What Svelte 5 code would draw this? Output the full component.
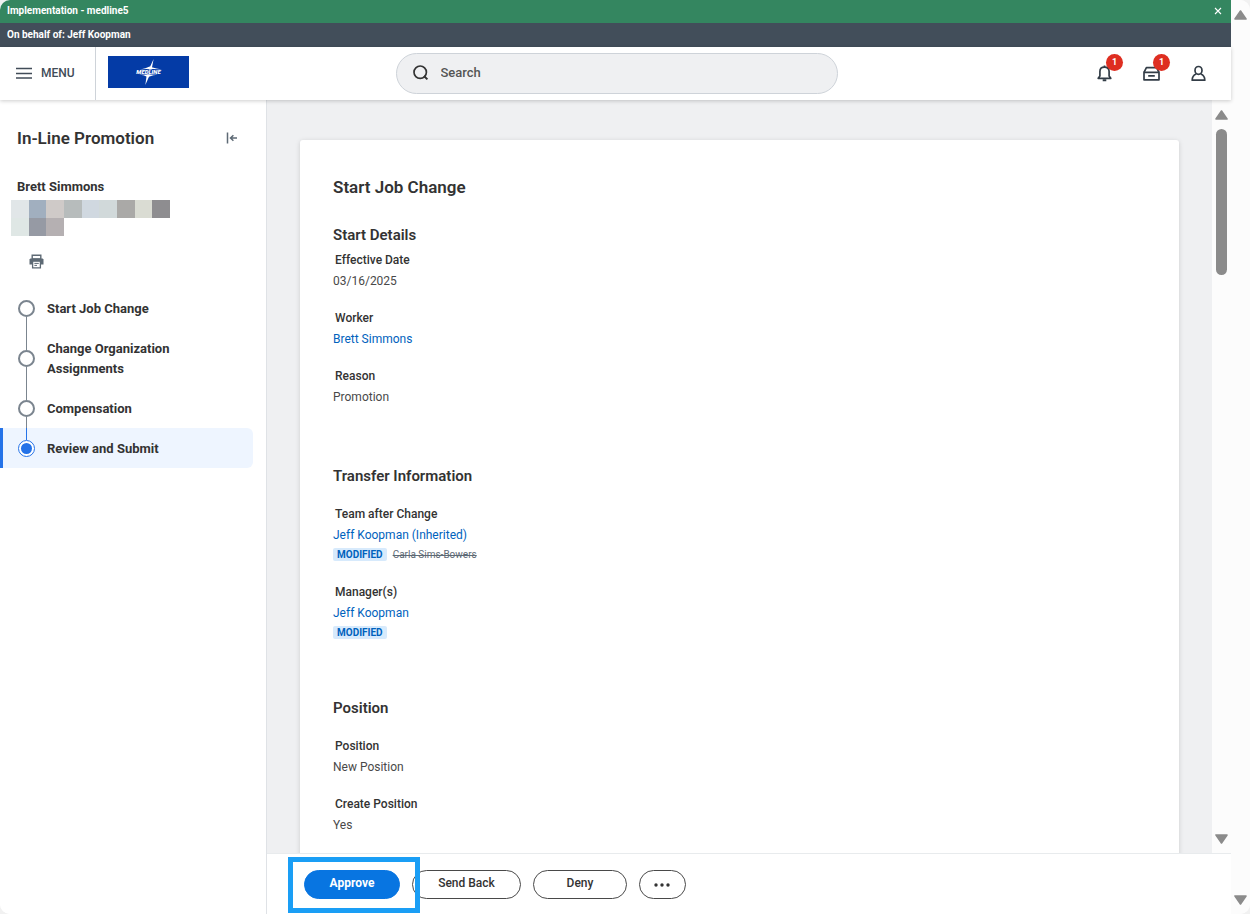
<script lang="ts">
  interface Field {
    label: string;
    value: string;
    link?: boolean;
    modified?: boolean;
    previous?: string;
  }

  interface Section {
    title: string;
    tight?: boolean;
    fields: Field[];
  }

  const sections: Section[] = [
    {
      title: 'Start Details',
      tight: true,
      fields: [
        { label: 'Effective Date', value: '03/16/2025' },
        { label: 'Worker', value: 'Brett Simmons', link: true },
        { label: 'Reason', value: 'Promotion' }
      ]
    },
    {
      title: 'Transfer Information',
      fields: [
        { label: 'Team after Change', value: 'Jeff Koopman (Inherited)', link: true, modified: true, previous: 'Carla Sims-Bowers' },
        { label: 'Manager(s)', value: 'Jeff Koopman', link: true, modified: true }
      ]
    },
    {
      title: 'Position',
      fields: [
        { label: 'Position', value: 'New Position' },
        { label: 'Create Position', value: 'Yes' }
      ]
    }
  ];

  const steps = ['Start Job Change', 'Change Organization Assignments', 'Compensation', 'Review and Submit'];
  let current = $state(3);
  let query = $state('');
  let showBanner = $state(true);

  // Redacted job title under the worker's name
  const mosaic = [
    '#e1e6e8', '#a1afbf', '#cfcac8', '#b7bcbc', '#d0d8e0', '#d1d9da', '#aaa9a7', '#dadcd3', '#8e8d90',
    '#dfe7e5', '#969aa4', '#b5b0b2'
  ];
</script>

{#snippet arrow(down: boolean)}
  <svg class="arrow" class:down width="13" height="10" viewBox="0 0 13 10" aria-hidden="true">
    <path d="M6.5 1 L12 9 H1 Z" fill="#8b8b8b" stroke="#8b8b8b" stroke-width="1.6" stroke-linejoin="round" />
  </svg>
{/snippet}

<div class="window">
  <div class="app">
    {#if showBanner}
      <div class="bar env">
        <span>Implementation - medline5</span>
        <button class="close" aria-label="Close" onclick={() => (showBanner = false)}>
          <svg width="8" height="8" viewBox="0 0 8 8"><path d="M1 1 L7 7 M7 1 L1 7" stroke="#fff" stroke-width="1.1" /></svg>
        </button>
      </div>
    {/if}
    <div class="bar behalf">On behalf of: Jeff Koopman</div>

    <header>
      <div class="brand">
        <button class="menu">
          <svg width="16" height="12" viewBox="0 0 16 12" aria-hidden="true">
            <path d="M0 1.5 H16 M0 6.5 H16 M0 11 H16" stroke="#414c58" stroke-width="1.7" />
          </svg>
          MENU
        </button>
        <a class="logo" href="#home" aria-label="Medline">
          <svg width="81" height="32" viewBox="0 0 81 32">
            <rect width="81" height="32" fill="#043ba6" />
            <path d="M45.6 3 L43.6 13.4 H40.8 Z M37.3 29 L38.8 18.6 H42 Z" fill="#fff" />
            <path d="M32 13.4 Q38 12.4 41.6 10.4 L43.8 11.2 Q48 12.6 54 13.4 Q46 12.9 41.5 13.2 Q37 12.9 32 13.4 Z" fill="#fff" />
            <path d="M31 18.8 Q36 18.9 39 20.8 L41.6 20.4 Q45 18.9 50 18.7 Q40 18.3 31 18.8 Z" fill="#fff" />
            <text x="40.5" y="18.2" text-anchor="middle" font-size="6" font-weight="900" font-style="italic" fill="#fff">MEDLINE</text>
          </svg>
        </a>
      </div>

      <label class="search">
        <svg width="16" height="16" viewBox="0 0 16 16" aria-hidden="true">
          <circle cx="7.2" cy="7.2" r="6.2" fill="none" stroke="#333" stroke-width="1.7" />
          <path d="M11 11 L14.4 14.4" stroke="#333" stroke-width="2" />
        </svg>
        <input type="search" placeholder="Search" aria-label="Search" bind:value={query} />
      </label>

      <nav class="tools">
        <button aria-label="Notifications">
          <svg width="17" height="17" viewBox="0 0 17 17" fill="none" stroke="#333d47" stroke-width="1.7">
            <path d="M8.5 0.4 V2" />
            <path d="M3.9 11 V6.6 Q3.9 2.1 8.5 2.1 Q13.1 2.1 13.1 6.6 V11 L14.8 13.3 H2.2 Z" stroke-linejoin="round" />
            <path d="M6.7 15.2 H10.3" stroke-width="2" />
          </svg>
          <span class="badge">1</span>
        </button>
        <button aria-label="Inbox">
          <svg width="17" height="17" viewBox="0 0 17 17" fill="none" stroke="#333d47" stroke-width="1.7" stroke-linejoin="round">
            <path d="M1 7.4 L3.4 2.6 H13.6 L16 7.4" />
            <path d="M1 7.4 H16 V14.8 H1 Z" />
            <path d="M5.2 10.9 H11.8" />
          </svg>
          <span class="badge">1</span>
        </button>
        <button aria-label="Profile">
          <svg width="17" height="17" viewBox="0 0 17 17" fill="none" stroke="#333d47" stroke-width="1.7" stroke-linejoin="round">
            <ellipse cx="8.5" cy="5.4" rx="3.5" ry="3.9" />
            <path d="M6.2 9 Q2.2 10.6 2.2 15.2 H14.8 Q14.8 10.6 10.8 9" />
          </svg>
        </button>
      </nav>
    </header>

    <div class="body">
      <aside>
        <div class="process">
          <h1>In-Line Promotion</h1>
          <button class="collapse" aria-label="Collapse panel">
            <svg width="12" height="12" viewBox="0 0 12 12" fill="none" stroke="#5e6a75" stroke-width="1.5">
              <path d="M1.5 0.5 V11.5" />
              <path d="M11 6 H4.5 M7.4 3.2 L4.5 6 L7.4 8.8" />
            </svg>
          </button>
        </div>
        <p class="worker">Brett Simmons</p>
        <div class="mosaic" aria-hidden="true">
          {#each mosaic as color}
            <i style="background: {color}"></i>
          {/each}
        </div>
        <button class="print" aria-label="Print">
          <svg width="15" height="15" viewBox="0 0 15 15">
            <path d="M3.2 1.2 H11.8 V5 H3.2 Z" fill="#fff" stroke="#5e6a75" stroke-width="1.4" />
            <path d="M1.4 4.4 H13.6 L14.5 5.4 V10.6 H0.5 V5.4 Z" fill="#5e6a75" />
            <path d="M3.6 7.2 H11.4 V13.8 H3.6 Z" fill="#fff" stroke="#5e6a75" stroke-width="1.3" />
            <path d="M5.4 9.4 H9.8 M5.4 11.4 H8" stroke="#5e6a75" stroke-width="1" />
          </svg>
        </button>
        <ol class="steps">
          {#each steps as step, i}
            <li>
              <button class="step" class:active={i === current} onclick={() => (current = i)}>
                <span class="track"><span class="dot"></span></span>
                <span class="name">{step}</span>
              </button>
            </li>
          {/each}
        </ol>
      </aside>

      <main>
        <div class="scroller">
          <div class="content">
            <article class="card">
              <h2>Start Job Change</h2>
              {#each sections as section}
                <section class:tight={section.tight}>
                  <h3>{section.title}</h3>
                  <dl>
                    {#each section.fields as field}
                      <div class="field">
                        <dt>{field.label}</dt>
                        <dd>
                          {#if field.link}<a href="#profile">{field.value}</a>{:else}{field.value}{/if}
                        </dd>
                        {#if field.modified}
                          <dd class="change">
                            <span class="tag">MODIFIED</span>
                            {#if field.previous}<s>{field.previous}</s>{/if}
                          </dd>
                        {/if}
                      </div>
                    {/each}
                  </dl>
                </section>
              {/each}
            </article>
          </div>
          <div class="scrollbar">
            {@render arrow(false)}
            <div class="rail"><div class="thumb"></div></div>
            {@render arrow(true)}
          </div>
        </div>

        <footer>
          <div class="target"><button class="pill primary">Approve</button></div>
          <button class="pill wide">Send Back</button>
          <button class="pill">Deny</button>
          <button class="pill more" aria-label="More actions">
            <svg width="16" height="4" viewBox="0 0 16 4" fill="#333">
              <circle cx="2" cy="2" r="1.7" /><circle cx="8" cy="2" r="1.7" /><circle cx="14" cy="2" r="1.7" />
            </svg>
          </button>
        </footer>
      </main>
    </div>
  </div>

  <div class="scrollbar">
    {@render arrow(false)}
    <div class="rail"></div>
    {@render arrow(true)}
  </div>
</div>

<style>
  :global(body) {
    margin: 0;
    background: #f1f1f1;
  }

  .window {
    display: flex;
    height: 100vh;
    border-radius: 10px;
    overflow: hidden;
    background: #fcfcfc;
    font-family: Roboto, 'Liberation Sans', sans-serif;
    font-size: 12px;
    color: #333;
  }

  .window * {
    box-sizing: border-box;
  }

  button {
    font: inherit;
    color: inherit;
    background: none;
    border: 0;
    padding: 0;
    cursor: pointer;
  }

  svg {
    display: block;
    flex: none;
  }

  h1, h2, h3, p, dl, dd, ol {
    margin: 0;
    padding: 0;
  }

  .app {
    flex: 1;
    min-width: 0;
    display: flex;
    flex-direction: column;
    background: #fff;
  }

  /* Environment bars */
  .bar {
    flex: none;
    display: flex;
    align-items: center;
    justify-content: space-between;
    height: 24px;
    padding: 0 9px 2px 7px;
    font-size: 10px;
    font-weight: 700;
    color: #fff;
  }

  .env {
    height: 23px;
    background: #348660;
  }

  .behalf {
    background: #424e5a;
  }

  /* Header */
  header {
    position: relative;
    z-index: 1;
    flex: none;
    display: grid;
    grid-template-columns: 1fr minmax(0, 442px) 1fr;
    align-items: center;
    height: 53px;
    padding-left: 2px;
    background: #fff;
    box-shadow: 0 1px 4px rgba(0, 0, 0, 0.2);
  }

  .brand {
    display: flex;
    align-items: center;
    gap: 12px;
    height: 100%;
  }

  .menu {
    display: flex;
    align-items: center;
    gap: 9px;
    height: 100%;
    padding: 0 20px 2px 14px;
    border-right: 1px solid #ced3d9;
    font-weight: 500;
    color: #414c58;
  }

  .logo {
    padding-bottom: 3px;
  }

  .search {
    display: flex;
    align-items: center;
    gap: 12px;
    height: 41px;
    padding: 0 16px 2px;
    border: 1px solid #ced3d9;
    border-radius: 21px;
    background: #eff0f2;
  }

  .search input {
    flex: 1;
    min-width: 0;
    padding: 0;
    border: 0;
    outline: 0;
    background: none;
    font: 500 13px Roboto, sans-serif;
    color: #333;
  }

  .search input::placeholder {
    color: #555;
    opacity: 1;
  }

  .tools {
    display: flex;
    justify-content: flex-end;
    gap: 30px;
    padding-right: 24px;
  }

  .tools button {
    position: relative;
  }

  .badge {
    position: absolute;
    top: -11px;
    right: -10px;
    width: 17px;
    height: 17px;
    border-radius: 50%;
    background: #de2e21;
    color: #fff;
    font-size: 9px;
    line-height: 17px;
    font-weight: 700;
    text-align: center;
  }

  .body {
    flex: 1;
    min-height: 0;
    display: flex;
  }

  /* Process panel */
  aside {
    flex: none;
    width: 267px;
    border-right: 1px solid #dfe2e6;
  }

  .process {
    display: flex;
    align-items: center;
    justify-content: space-between;
    padding: 26px 28px 0 17px;
  }

  h1, h2 {
    font-size: 17px;
    line-height: 24px;
    font-weight: 600;
  }

  .worker {
    padding: 27px 17px 0;
    font-size: 13px;
    line-height: 20px;
    font-weight: 700;
  }

  .mosaic {
    display: grid;
    grid-template-columns: repeat(9, 1fr);
    grid-auto-rows: 18px;
    width: 159px;
    margin: 3px 0 0 11px;
  }

  .print {
    display: block;
    margin: 18px 0 0 29px;
  }

  .steps {
    list-style: none;
    margin: 19px 13px 0 0;
  }

  .step {
    display: flex;
    width: 100%;
    border-left: 3px solid transparent;
    border-radius: 0 6px 6px 0;
    font-size: 13px;
    line-height: 20px;
    font-weight: 700;
    text-align: left;
  }

  .track {
    display: flex;
    flex-direction: column;
    align-items: center;
    width: 17px;
    margin: 0 12px 0 15px;
    color: #7b858f;
  }

  .track::before,
  .track::after {
    content: '';
    flex: 1;
    width: 1px;
    background: currentColor;
  }

  li:first-child .track::before,
  li:last-child .track::after {
    background: none;
  }

  .dot {
    width: 17px;
    height: 17px;
    padding: 2px;
    border: 2px solid currentColor;
    border-radius: 50%;
    background: #fff;
  }

  .name {
    flex: 1;
    padding: 11px 60px 9px 0;
  }

  .step.active {
    border-left-color: #2573e8;
    background: #eef5ff;
  }

  .active .track {
    color: #2573e8;
  }

  .active .dot::before {
    content: '';
    display: block;
    height: 100%;
    border-radius: 50%;
    background: currentColor;
    box-shadow: 0 0 0 1px currentColor;
  }

  .active .dot {
    border-width: 1px;
    padding: 3px;
  }

  /* Review page */
  main {
    flex: 1;
    min-width: 0;
    display: flex;
    flex-direction: column;
  }

  .scroller {
    flex: 1;
    min-height: 0;
    display: flex;
    background: #eff0f2;
  }

  .content {
    flex: 1;
    min-width: 0;
    overflow: hidden;
    padding: 40px 33px 0;
  }

  .card {
    padding: 35px 33px;
    border-radius: 3px;
    background: #fff;
    box-shadow: 0 1px 5px rgba(0, 0, 0, 0.15);
  }

  h3 {
    margin-bottom: 16px;
    font-size: 15px;
    line-height: 24px;
    font-weight: 600;
  }

  section {
    margin-top: 56px;
  }

  .tight {
    margin-top: 24px;
  }

  .tight h3 {
    margin-bottom: 3px;
  }

  .field {
    line-height: 21px;
  }

  .field + .field {
    margin-top: 16px;
  }

  .field:has(.change) + .field {
    margin-top: 20px;
  }

  dt {
    padding-left: 2px;
    font-weight: 500;
  }

  dd {
    color: #494949;
  }

  a {
    color: #0062bd;
    text-decoration: none;
  }

  .change {
    display: flex;
    align-items: center;
    gap: 6px;
    height: 16px;
    font-size: 10px;
  }

  .tag {
    padding: 0 4px;
    border-radius: 2px;
    background: #d7eafc;
    color: #0062bd;
    line-height: 13px;
    font-weight: 700;
  }

  s {
    color: #5e6a75;
  }

  /* Actions */
  footer {
    flex: none;
    display: flex;
    gap: 12px;
    padding: 16px 37px 15px;
    border-top: 1px solid #e8ebed;
  }

  .target {
    position: relative;
  }

  .target::after {
    content: '';
    position: absolute;
    inset: -13px -20px -14px -16px;
    z-index: 1;
    border: 5px solid #1a9ef5;
    pointer-events: none;
  }

  .pill {
    min-width: 94px;
    height: 29px;
    padding: 0 20px 3px;
    border: 1px solid #494949;
    border-radius: 15px;
    font-weight: 500;
  }

  .primary {
    min-width: 96px;
    border-color: #0875e1;
    background: #0875e1;
    color: #fff;
    font-weight: 700;
  }

  .wide {
    min-width: 109px;
  }

  .more {
    min-width: 47px;
    padding: 0 14px;
  }

  /* Scrollbars */
  .scrollbar {
    flex: none;
    display: flex;
    flex-direction: column;
    align-items: center;
    width: 19px;
    padding: 10px 0 9px;
    background: #fcfcfc;
  }

  .rail {
    flex: 1;
    width: 11px;
    padding: 9px 0;
  }

  .thumb {
    height: 21%;
    border-radius: 6px;
    background: #8b8b8b;
  }

  .down {
    transform: rotate(180deg);
  }
</style>
